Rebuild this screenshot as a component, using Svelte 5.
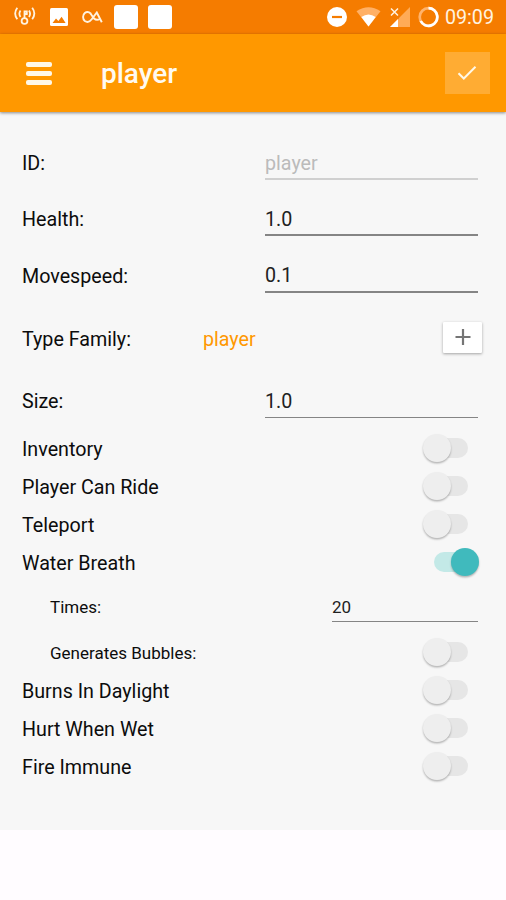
<script lang="ts">
	const fields = [
		{ label: 'ID:', value: 'player', disabled: true },
		{ label: 'Health:', value: '1.0', disabled: false },
		{ label: 'Movespeed:', value: '0.1', disabled: false }
	];

	let toggles = $state([
		{ label: 'Inventory', on: false },
		{ label: 'Player Can Ride', on: false },
		{ label: 'Teleport', on: false },
		{ label: 'Water Breath', on: true }
	]);

	let moreToggles = $state([
		{ label: 'Generates Bubbles:', on: false, nested: true },
		{ label: 'Burns In Daylight', on: false, nested: false },
		{ label: 'Hurt When Wet', on: false, nested: false },
		{ label: 'Fire Immune', on: false, nested: false }
	]);
</script>

{#snippet toggle(item)}
	<button
		class="switch"
		class:on={item.on}
		role="switch"
		aria-checked={item.on}
		aria-label={item.label}
		onclick={() => (item.on = !item.on)}
	>
		<span class="thumb"></span>
	</button>
{/snippet}

<div class="screen">
	<div class="status-bar">
		<div class="notifications">
			<svg class="cast" width="22" height="20" viewBox="0 0 22 20" fill="none" stroke="#fff3e0" stroke-width="1.8">
				<circle cx="10.5" cy="15" r="2.9" />
				<path d="M10.5 12V4.5M10.5 5.5h2.3v2.5h-2.3" />
				<path d="M6.5 4.5Q4.3 7.8 6.5 11M15 4.5q2.2 3.3 0 6.5M3.3 1.8Q-1 7.6 3.3 13.2M18.2 1.8q4.3 5.8 0 11.4" />
			</svg>
			<svg class="photo" width="18" height="18" viewBox="0 0 18 18">
				<rect width="18" height="18" rx="1.5" fill="#fff" />
				<path d="M2.5 15l3.5-4.6 2.4 2.6 3.2-4.2 4 6.2z" fill="#f57c00" />
			</svg>
			<svg class="loop" width="21" height="12" viewBox="0 0 21 12" fill="none" stroke="#fff3e0" stroke-width="1.9">
				<path d="M9 2.8C7 0.900 4.500 0.700 2.800 2C0.500 4 0.500 8 2.800 10C5.500 11.800 8 10.500 9.500 8.500L14.800 1.500L19.800 11.300" />
				<path d="M8.500 2.500L12 7.500Q14.500 9.800 18 8" />
			</svg>
			<span class="block"></span>
			<span class="block"></span>
		</div>
		<div class="system">
			<svg class="dnd" width="20" height="20" viewBox="0 0 20 20">
				<circle cx="10" cy="10" r="10" fill="#fff" />
				<path d="M5 10h10" stroke="#f57c00" stroke-width="2.2" />
			</svg>
			<svg class="wifi" width="25" height="20" viewBox="0 0 25 20">
				<path d="M0.5 4.2Q12.5-3.5 24.5 4.2L12.5 19.5z" fill="#ffb066" />
				<path d="M5.3 10Q12.5 5 19.7 10L12.5 19.5z" fill="#fff" />
			</svg>
			<svg class="signal" width="20" height="20" viewBox="0 0 20 20">
				<path d="M20 0v20H0z" fill="#ffab57" />
				<path d="M0 0h9v11L0 20z" fill="#f57c00" />
				<path d="M8 12v8H0z" fill="#fff" />
				<path d="M1 1.5l7 7M8 1.5l-7 7" stroke="#fff3e0" stroke-width="1.5" />
			</svg>
			<svg class="battery" width="21" height="22" viewBox="0 0 21 22" fill="none" stroke-width="2.7">
				<circle cx="10.5" cy="11" r="8.8" stroke="#ffb36b" />
				<path d="M10.5 2.2A8.8 8.8 0 1 1 2.7 15" stroke="#fff" />
			</svg>
			<span class="clock">09:09</span>
		</div>
	</div>

	<header class="toolbar">
		<button class="menu" aria-label="Menu">
			<span></span>
			<span></span>
			<span></span>
		</button>
		<h1>player</h1>
		<button class="confirm" aria-label="Save">
			<svg width="20" height="16" viewBox="0 0 20 16" fill="none" stroke="#fff8e8" stroke-width="2">
				<path d="M1.5 8.2l5.3 5.3L18.5 1.8" />
			</svg>
		</button>
	</header>

	<main>
		{#each fields as field}
			<div class="row field">
				<span class="label">{field.label}</span>
				<input value={field.value} disabled={field.disabled} aria-label={field.label} />
			</div>
		{/each}

		<div class="row family">
			<span class="label">Type Family:</span>
			<span class="family-name">player</span>
			<button class="add" aria-label="Add family">
				<svg width="16" height="18" viewBox="0 0 16 18" stroke="#757575" stroke-width="2.2">
					<path d="M8 1v16M0.5 9h15" />
				</svg>
			</button>
		</div>

		<div class="row field size">
			<span class="label">Size:</span>
			<input class="thin" value="1.0" aria-label="Size" />
		</div>

		{#each toggles as item}
			<div class="row">
				<span class="label">{item.label}</span>
				{@render toggle(item)}
			</div>
		{/each}

		<div class="row nested times">
			<span class="label">Times:</span>
			<input class="thin" value="20" aria-label="Times" />
		</div>

		{#each moreToggles as item}
			<div class="row" class:nested={item.nested}>
				<span class="label">{item.label}</span>
				{@render toggle(item)}
			</div>
		{/each}
	</main>
</div>

<style>
	:global(body) {
		margin: 0;
		background: #fffcff;
	}

	.screen {
		width: 506px;
		height: 900px;
		overflow: hidden;
		font-family: Roboto, sans-serif;
		color: #0c0c0c;
		background: #fffcff;
	}

	button {
		border: none;
		padding: 0;
		background: none;
	}

	svg {
		display: block;
		flex: none;
	}

	.status-bar {
		display: flex;
		justify-content: space-between;
		box-sizing: border-box;
		height: 34px;
		padding: 0 12px 0 14px;
		background: #f57c00;
	}

	.notifications,
	.system {
		display: flex;
		align-items: center;
	}

	.cast {
		margin-top: -3px;
	}

	.photo {
		margin-left: 14px;
	}

	.loop {
		margin: 0 11px 0 14px;
	}

	.block {
		width: 24px;
		height: 24px;
		margin-right: 10px;
		border-radius: 3px;
		background: #fff;
	}

	.wifi {
		margin-left: 9px;
	}

	.signal {
		margin: 0 8px 0 9px;
	}

	.clock {
		margin-left: 6px;
		font-size: 19.7px;
		line-height: 35px;
		color: #fff3e0;
	}

	.toolbar {
		position: relative;
		display: flex;
		align-items: center;
		box-sizing: border-box;
		height: 78px;
		padding: 0 16.5px 0 26px;
		background: #ff9800;
		box-shadow: 0 1px 3px rgba(0, 0, 0, 0.45);
	}

	.menu {
		display: flex;
		flex-direction: column;
		gap: 4px;
		width: 26px;
	}

	.menu span {
		height: 5px;
		border-radius: 2px;
		background: #fff8e8;
	}

	h1 {
		flex: 1;
		margin: 1px 0 0 49px;
		font-size: 28px;
		font-weight: 500;
		line-height: 34px;
		color: #fffaf0;
	}

	.confirm {
		display: flex;
		align-items: center;
		justify-content: center;
		width: 45px;
		height: 42px;
		background: #ffac33;
	}

	main {
		box-sizing: border-box;
		height: 718px;
		padding: 23px 28px 0 22px;
		background: #f7f7f7;
	}

	.row {
		display: flex;
		align-items: center;
		justify-content: space-between;
		height: 38px;
		font-size: 19.7px;
	}

	.row.field {
		height: 56.3px;
	}

	.row.family {
		height: 70.2px;
	}

	.row.size {
		height: 54.3px;
		margin-bottom: 1.7px;
	}

	.row.nested {
		padding-left: 28px;
		font-size: 17px;
	}

	.row.times {
		height: 51px;
		margin-bottom: 1px;
	}

	input {
		box-sizing: border-box;
		width: 213px;
		height: 34px;
		padding: 2px 0 0;
		border: none;
		border-bottom: 2px solid #858585;
		border-radius: 0;
		outline: none;
		background: none;
		font: inherit;
		color: #212121;
	}

	input.thin {
		padding-top: 1px;
		border-bottom-width: 1px;
	}

	input:disabled {
		color: #bbb;
		border-color: #d0d0d0;
	}

	.times input {
		width: 146px;
		height: 29px;
		padding: 0;
	}

	.family-name {
		flex: 1;
		margin-left: 72px;
		color: #ff9800;
	}

	.label,
	.family-name {
		padding-top: 1px;
	}

	.nested .label {
		padding: 0 0 1px;
	}

	.add {
		display: flex;
		align-items: center;
		justify-content: center;
		width: 39px;
		height: 31px;
		margin: 0 -4px 3px 0;
		border-radius: 1px;
		background: #fff;
		box-shadow: 0 1px 3px rgba(0, 0, 0, 0.35);
	}

	.switch {
		display: flex;
		align-items: center;
		width: 34px;
		height: 20px;
		margin: 0 10px 3px 0;
		border-radius: 10px;
		background: #e6e6e6;
	}

	.thumb {
		flex: none;
		width: 28px;
		height: 28px;
		margin-left: -11px;
		border-radius: 50%;
		background: #eee;
		box-shadow: 0 1.5px 2px rgba(0, 0, 0, 0.27);
	}

	.switch.on {
		background: #c3e9e7;
	}

	.switch.on .thumb {
		margin-left: 16.5px;
		background: #40babd;
	}
</style>
